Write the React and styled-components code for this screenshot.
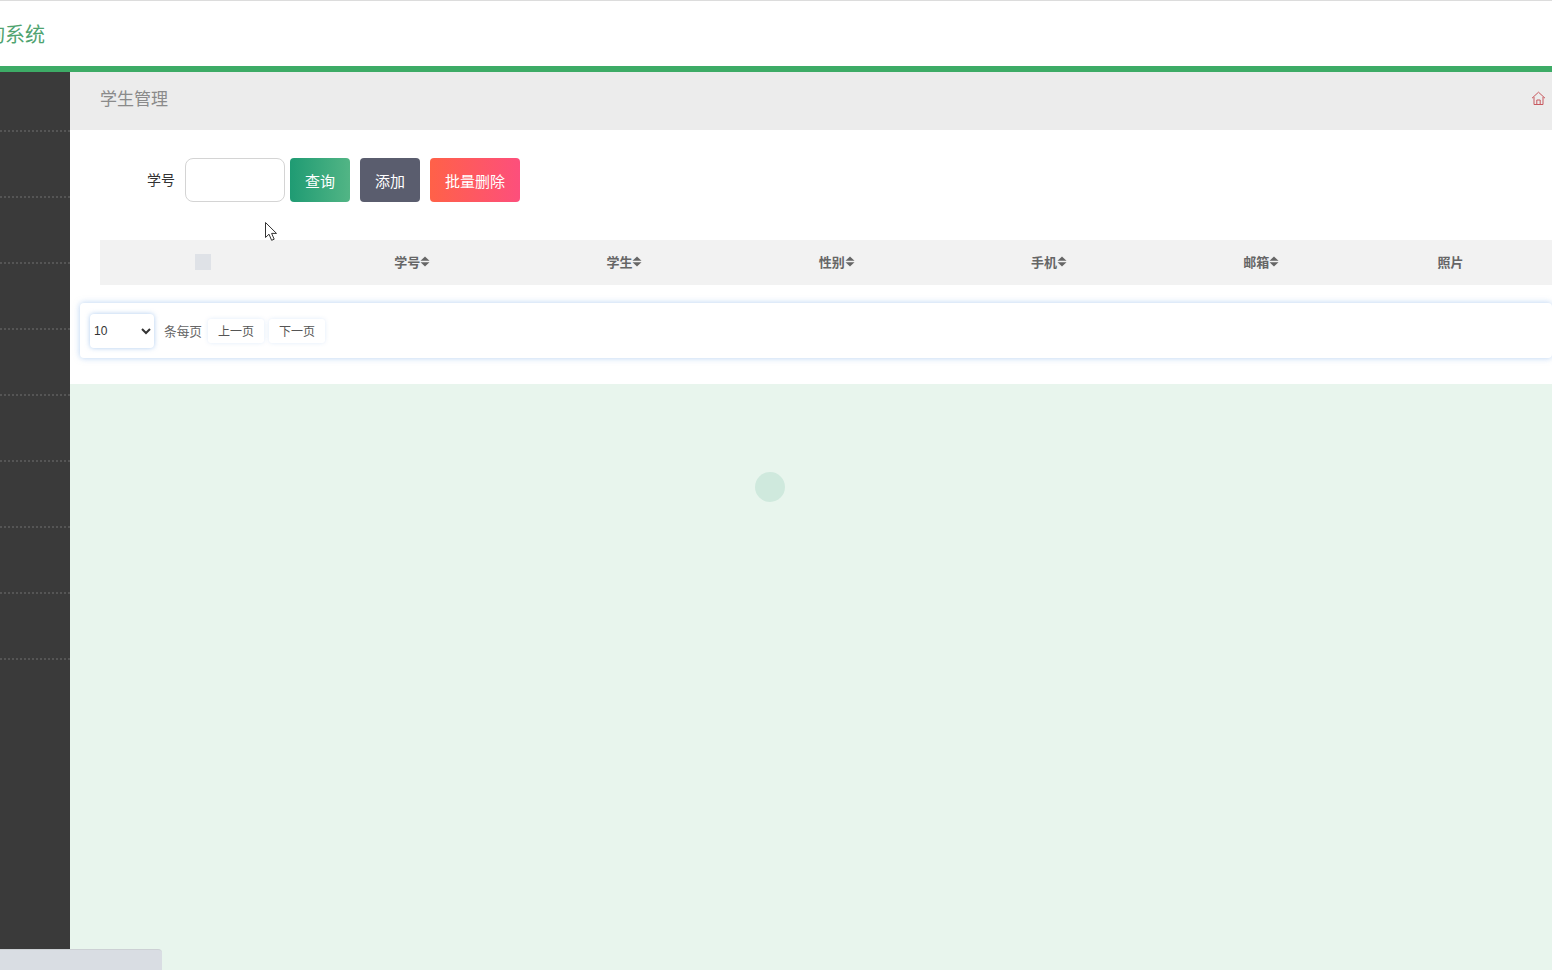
import React from 'react';
import styled, { createGlobalStyle } from 'styled-components';

const GlobalStyle = createGlobalStyle`
    html, body {
        margin: 0;
        padding: 0;
        height: 100%;
        overflow: hidden;
        background: #fff;
        font-family: "Liberation Sans", "Noto Sans CJK SC", sans-serif;
    }
`

const Page = styled.div`
    position: relative;
    width: 1552px;
    height: 970px;
    display: flex;
    flex-direction: column;
    overflow: hidden;
`

const TopBar = styled.header`
    height: 65px;
    flex: none;
    display: flex;
    align-items: center;
    background: #fff;
    border-top: 1px solid #dcdcdc;
`

const Brand = styled.div`
    width: 45px;
    display: flex;
    justify-content: flex-end;
    overflow: hidden;
    white-space: nowrap;
    font-size: 20px;
    line-height: 28px;
    margin-top: 3px;
    color: #4fa36f;
`

const GreenLine = styled.div`
    height: 6px;
    flex: none;
    background: #3dab66;
`

const Body = styled.div`
    flex: 1;
    display: flex;
    min-height: 0;
`

const Sidebar = styled.nav`
    width: 70px;
    flex: none;
    background: #3a3a3a;
`

const SideItem = styled.div`
    height: ${p => (p.$first ? 58 : 64)}px;
    border-bottom: 2px dotted #555;
`

const Main = styled.main`
    flex: 1;
    min-width: 0;
    display: flex;
    flex-direction: column;
`

const Crumb = styled.div`
    height: 50px;
    flex: none;
    display: flex;
    align-items: center;
    justify-content: space-between;
    padding: 0 6px 8px 30px;
    background: #ececec;
    font-size: 17px;
    color: #8a8a8a;
`

const Panel = styled.section`
    height: 254px;
    flex: none;
    box-sizing: border-box;
    padding-top: 28px;
    background: #fff;
`

const SearchRow = styled.form`
    display: flex;
    align-items: center;
    height: 44px;
    padding-left: 77px;
    margin: 0;
`

const Label = styled.label`
    font-size: 14px;
    color: #333;
    margin: -2px 10px 0 0;
`

const SearchInput = styled.input`
    width: 100px;
    height: 44px;
    box-sizing: border-box;
    border: 1px solid #d4d4d4;
    border-radius: 8px;
    background: #fff;
    margin-right: 5px;
    outline: none;
`

const Button = styled.button`
    width: ${p => p.$width}px;
    height: 44px;
    margin-right: 10px;
    border: 0;
    border-radius: 4px;
    padding: 0;
    color: #fff;
    font: inherit;
    font-size: 15px;
    background: ${p => p.$bg};
`

const TableHead = styled.div`
    display: grid;
    grid-template-columns: 206px repeat(5, 212.3px) 166px;
    align-items: center;
    height: 45px;
    margin: 38px 0 0 30px;
    padding-bottom: 2px;
    box-sizing: border-box;
    background: #f2f2f2;
    font-size: 13px;
    font-weight: 700;
    color: #666;
    white-space: nowrap;
`

const HeadCell = styled.div`
    display: flex;
    align-items: center;
    justify-content: center;
`

const FakeCheck = styled.span`
    width: 16px;
    height: 16px;
    background: #dfe2e7;
`

const Pager = styled.div`
    display: flex;
    align-items: center;
    height: 55px;
    margin: 18px 0 0 10px;
    padding-left: 10px;
    background: #fff;
    border-radius: 4px;
    box-shadow: 0 0 6px rgba(120, 170, 230, 0.55);
    font-size: 12.7px;
    color: #666;
`

const PageSize = styled.select`
    width: 64px;
    height: 34px;
    box-sizing: border-box;
    margin-right: 10px;
    padding-left: 0;
    border: 0;
    border-radius: 4px;
    background: #fff;
    box-shadow: 0 0 5px rgba(120, 170, 230, 0.6);
    font: inherit;
    font-size: 12px;
    color: #333;
    outline: none;
`

const PageButton = styled.span`
    width: 56px;
    height: 24px;
    margin-left: ${p => p.$gap}px;
    display: flex;
    align-items: center;
    justify-content: center;
    border-radius: 3px;
    background: #fff;
    color: #555;
    font-size: 12px;
    box-shadow: 0 0 4px rgba(120, 170, 230, 0.22);
`

const LoaderArea = styled.div`
    flex: 1;
    background: #e8f5ed;
    padding: 88px 0 0 685px;
`

const LoaderDot = styled.div`
    width: 30px;
    height: 30px;
    border-radius: 50%;
    background: #cfe9dd;
`

const BottomTab = styled.div`
    position: absolute;
    left: 0;
    bottom: 0;
    width: 162px;
    height: 21px;
    background: #d9dde3;
    border-top: 1px solid #ccd0d4;
    box-sizing: border-box;
    border-top-right-radius: 4px;
`

const Pointer = styled.svg`
    position: absolute;
    left: 264px;
    top: 221px;
`

const HomeMark = styled.svg`
    margin-top: 2px;
`

const SortIcon = () => (
    <svg width="10" height="11" viewBox="0 0 10 11" fill="#666">
        <path d="M5 0.5 9.5 4.8H0.5Z" />
        <path d="M5 10.5 9.5 6.2H0.5Z" />
    </svg>
)

const HomeIcon = () => (
    <HomeMark width="15" height="15" viewBox="0 0 15 15" fill="none" stroke="#c8595f" strokeWidth="1">
        <path d="M1 7.2 7.5 1.2 14 7.2" />
        <path d="M3 6v7.5h9V6" />
        <path d="M5.8 13.5V9h3.4v4.5" />
    </HomeMark>
)

const columns = [
    { title: '学号', sort: true },
    { title: '学生', sort: true },
    { title: '性别', sort: true },
    { title: '手机', sort: true },
    { title: '邮箱', sort: true },
    { title: '照片', sort: false },
]

const App = () => (
    <Page>
        <GlobalStyle />
        <TopBar>
            <Brand>学生信息查询系统</Brand>
        </TopBar>
        <GreenLine />
        <Body>
            <Sidebar>
                <SideItem $first />
                {[...Array(8)].map((_, i) => <SideItem key={i} />)}
            </Sidebar>
            <Main>
                <Crumb>
                    学生管理
                    <HomeIcon />
                </Crumb>
                <Panel>
                    <SearchRow>
                        <Label>学号</Label>
                        <SearchInput />
                        <Button type="button" $width={60} $bg="linear-gradient(90deg, #1f9b73, #52b585)">查询</Button>
                        <Button type="button" $width={60} $bg="#5a5d6e">添加</Button>
                        <Button type="button" $width={90} $bg="linear-gradient(90deg, #ff6148, #fd4f7c)">批量删除</Button>
                    </SearchRow>
                    <TableHead>
                        <HeadCell><FakeCheck /></HeadCell>
                        {columns.map(c => (
                            <HeadCell key={c.title}>
                                {c.title}
                                {c.sort && <SortIcon />}
                            </HeadCell>
                        ))}
                    </TableHead>
                    <Pager>
                        <PageSize defaultValue="10">
                            <option>10</option>
                            <option>20</option>
                            <option>50</option>
                        </PageSize>
                        条每页
                        <PageButton $gap={6}>上一页</PageButton>
                        <PageButton $gap={5}>下一页</PageButton>
                    </Pager>
                </Panel>
                <LoaderArea>
                    <LoaderDot />
                </LoaderArea>
            </Main>
        </Body>
        <BottomTab />
        <Pointer width="14" height="21" viewBox="0 0 14 21">
            <path d="M1.5 1.5V16.5L5 13.2 7.6 19.3 10.2 18.2 7.6 12.4H12.5Z" fill="#fff" stroke="#333" strokeWidth="1" />
        </Pointer>
    </Page>
)

export default App
